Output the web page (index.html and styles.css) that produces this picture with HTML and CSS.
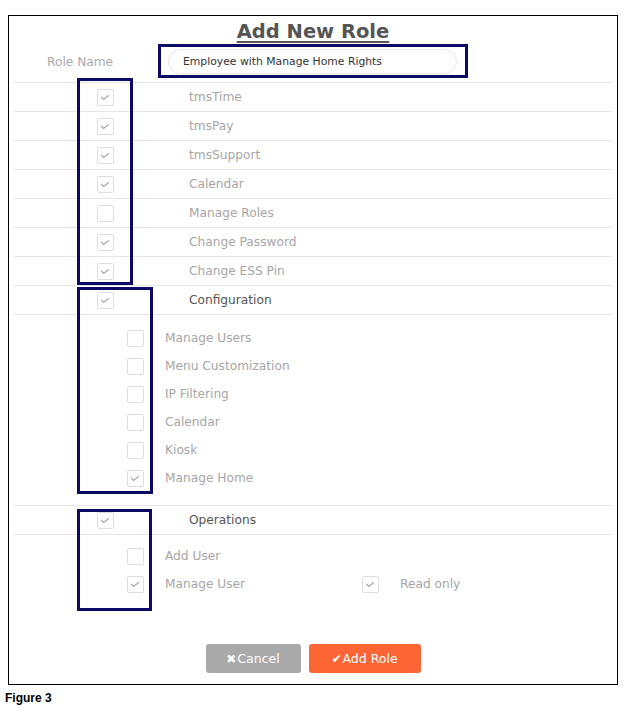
FILE: index.html
```html
<!DOCTYPE html>
<html>
<head>
<meta charset="utf-8">
<link rel="stylesheet" href="styles.css">
</head>
<body>
<div class="frame">
  <h1 class="title">Add New Role</h1>
  <div class="role-row">
    <span class="role-label">Role Name</span>
    <div class="role-input">Employee with Manage Home Rights</div>
  </div>

  <div class="row"><span class="cb on"></span><span class="lbl">tmsTime</span></div>
  <div class="row"><span class="cb on"></span><span class="lbl">tmsPay</span></div>
  <div class="row"><span class="cb on"></span><span class="lbl">tmsSupport</span></div>
  <div class="row"><span class="cb on"></span><span class="lbl">Calendar</span></div>
  <div class="row"><span class="cb"></span><span class="lbl">Manage Roles</span></div>
  <div class="row"><span class="cb on"></span><span class="lbl">Change Password</span></div>
  <div class="row"><span class="cb on"></span><span class="lbl">Change ESS Pin</span></div>
  <div class="row section"><span class="cb on"></span><span class="lbl dark">Configuration</span></div>

  <div class="sub sub-config">
    <div class="sub-row"><span class="cb"></span><span class="sub-lbl">Manage Users</span></div>
    <div class="sub-row"><span class="cb"></span><span class="sub-lbl">Menu Customization</span></div>
    <div class="sub-row"><span class="cb"></span><span class="sub-lbl">IP Filtering</span></div>
    <div class="sub-row"><span class="cb"></span><span class="sub-lbl">Calendar</span></div>
    <div class="sub-row"><span class="cb"></span><span class="sub-lbl">Kiosk</span></div>
    <div class="sub-row"><span class="cb on"></span><span class="sub-lbl">Manage Home</span></div>
  </div>

  <div class="row section"><span class="cb on"></span><span class="lbl dark">Operations</span></div>

  <div class="sub sub-ops">
    <div class="sub-row"><span class="cb"></span><span class="sub-lbl">Add User</span></div>
    <div class="sub-row"><span class="cb on"></span><span class="sub-lbl">Manage User</span><span class="cb on"></span><span class="sub-lbl">Read only</span></div>
  </div>

  <div class="buttons">
    <button class="btn cancel"><span class="ico">&#x2716;</span>Cancel</button>
    <button class="btn add"><span class="ico">&#x2714;</span>Add Role</button>
  </div>

  <div class="mark mark-input"></div>
  <div class="mark mark-main"></div>
  <div class="mark mark-config"></div>
  <div class="mark mark-ops"></div>
</div>
<div class="caption">Figure 3</div>
</body>
</html>
```

FILE: styles.css
```css
html, body {
  margin: 0;
  padding: 0;
  background: #fff;
}
body {
  font-family: "DejaVu Sans", "Noto Sans", sans-serif;
  width: 632px;
  height: 719px;
  overflow: hidden;
}
.frame {
  position: relative;
  box-sizing: border-box;
  margin: 15px 0 0 8px;
  width: 610px;
  height: 670px;
  border: 1px solid #000;
  padding: 0 5px;
}
.title {
  margin: 0;
  padding-top: 6px;
  height: 19px;
  line-height: 19px;
  font-size: 19.5px;
  font-weight: bold;
  color: #555;
  text-align: center;
  text-decoration: underline;
  text-decoration-thickness: 2px;
  text-underline-offset: 3px;
}
.role-row {
  display: flex;
  align-items: center;
  height: 41px;
}
.role-label {
  margin-left: 33px;
  width: 121px;
  font-size: 12.2px;
  color: #aaa;
}
.role-input {
  box-sizing: border-box;
  width: 289px;
  height: 25px;
  border: 1px solid #e8e8e8;
  border-radius: 13px;
  padding-left: 14px;
  display: flex;
  align-items: center;
  font-size: 10.8px;
  color: #333;
}
.row {
  box-sizing: border-box;
  height: 29px;
  border-top: 1px solid #e6e6e6;
  display: flex;
  align-items: center;
  padding-left: 83px;
  gap: 75px;
}
.row.section {
  height: 30px;
  border-bottom: 1px solid #e6e6e6;
}
.cb {
  box-sizing: border-box;
  flex: none;
  width: 17px;
  height: 17px;
  border: 1px solid #dedede;
  border-radius: 2px;
  background: #fff;
  position: relative;
}
.cb.on::after {
  content: "";
  position: absolute;
  left: 5px;
  top: 3px;
  width: 3px;
  height: 6px;
  border-right: 1px solid #9a9a9a;
  border-bottom: 1px solid #9a9a9a;
  transform: rotate(45deg) skewX(-8deg);
  transform-origin: center;
}
.lbl {
  font-size: 12.2px;
  color: #a6a6a6;
}
.lbl.dark {
  color: #555;
}
.sub-config {
  padding: 9px 0 13px;
}
.sub-ops {
  padding: 7px 0 0;
}
.sub-row {
  height: 28px;
  display: flex;
  align-items: center;
  padding-left: 113px;
}
.sub-row .cb + .sub-lbl {
  margin-left: 21px;
}
.sub-lbl {
  font-size: 12.2px;
  color: #a6a6a6;
}
.sub-row .sub-lbl:nth-child(2) {
  width: 197px;
}
.buttons {
  margin-top: 46px;
  display: flex;
  justify-content: center;
  gap: 8px;
}
.btn {
  height: 29px;
  border: none;
  border-radius: 3px;
  color: #fff;
  font-family: "DejaVu Sans", sans-serif;
  font-size: 12.5px;
  padding: 0;
  display: flex;
  align-items: center;
  justify-content: center;
}
.btn .ico {
  font-size: 12px;
  margin-right: 1px;
}
.cancel {
  width: 95px;
  background: #a9a9a9;
}
.add {
  width: 112px;
  background: #fd6535;
}
.mark {
  position: absolute;
  box-sizing: border-box;
  border: 3px solid #0b0b66;
  pointer-events: none;
}
.mark-input {
  left: 149px;
  top: 28px;
  width: 310px;
  height: 34px;
}
.mark-main {
  left: 68px;
  top: 62px;
  width: 56px;
  height: 207px;
}
.mark-config {
  left: 68px;
  top: 271px;
  width: 76px;
  height: 207px;
}
.mark-ops {
  left: 68px;
  top: 493px;
  width: 75px;
  height: 102px;
}
.caption {
  margin: 6px 0 0 5px;
  font-family: "Liberation Sans Narrow", "Liberation Sans", Arial, sans-serif;
  font-stretch: condensed;
  font-weight: bold;
  font-size: 12px;
  line-height: 14px;
  color: #000;
}
```
